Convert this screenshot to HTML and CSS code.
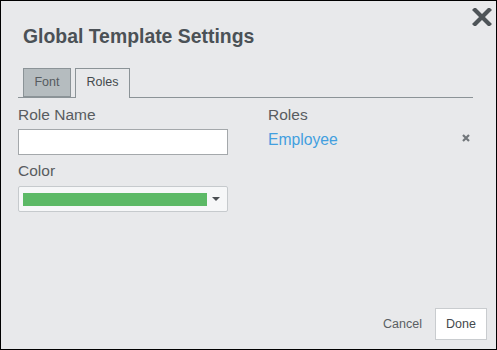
FILE: index.html
```html
<!DOCTYPE html>
<html lang="en">
<head>
  <meta charset="UTF-8">
  <title>Global Template Settings</title>
  <link rel="stylesheet" href="styles.css">
</head>
<body>
  <div class="dialog">
    <button class="close-button" title="Close">
      <svg width="20" height="18" viewBox="0 0 20 18">
        <path d="M3 2 L17 16 M17 2 L3 16" stroke="#4e5458" stroke-width="4.2" stroke-linecap="square"/>
      </svg>
    </button>

    <h1 class="dialog-title">Global Template Settings</h1>

    <div class="tab-bar">
      <div class="tab">Font</div>
      <div class="tab tab-active">Roles</div>
    </div>

    <div class="form-columns">
      <div class="form-left">
        <label class="field-label">Role Name</label>
        <input class="text-input" type="text">
        <label class="field-label color-label">Color</label>
        <div class="color-select">
          <span class="color-swatch"></span>
          <span class="caret"></span>
        </div>
      </div>
      <div class="form-right">
        <div class="field-label">Roles</div>
        <div class="role-row">
          <a class="role-link">Employee</a>
          <svg class="role-remove" width="8" height="8" viewBox="0 0 8 8">
            <path d="M1 1 L7 7 M7 1 L1 7" stroke="#72777b" stroke-width="2.2"/>
          </svg>
        </div>
      </div>
    </div>

    <div class="dialog-footer">
      <span class="cancel-link">Cancel</span>
      <button class="done-button">Done</button>
    </div>
  </div>
</body>
</html>
```

FILE: styles.css
```css
body, html {
  margin: 0;
  padding: 0;
  font-family: "Liberation Sans", Arial, sans-serif;
}

.dialog {
  position: relative;
  box-sizing: border-box;
  width: 497px;
  height: 350px;
  border: 1px solid #000;
  background-color: #e8e9eb;
  display: flex;
  flex-direction: column;
  padding: 0 23px 0 17px;
}

.close-button {
  position: absolute;
  top: 7px;
  right: 4px;
  width: 20px;
  height: 18px;
  padding: 0;
  border: none;
  background: none;
  cursor: pointer;
}

.close-button svg {
  display: block;
}

.dialog-title {
  margin: 24px 0 0 5px;
  font-size: 19.4px;
  line-height: 22px;
  font-weight: 700;
  color: #4b5156;
}

.tab-bar {
  display: flex;
  gap: 4px;
  margin-top: 21px;
  padding-left: 5px;
  border-bottom: 1px solid #8b9397;
  height: 29px;
}

.tab {
  box-sizing: border-box;
  height: 29px;
  padding: 0;
  border: 1px solid #8b9397;
  background-color: #b5bcbf;
  font-size: 12.5px;
  line-height: 27px;
  color: #565b5f;
  width: 48px;
  text-align: center;
}

.tab-active {
  width: 55px;
  height: 30px;
  border-bottom: none;
  background-color: #e8e9eb;
  color: #44494d;
}

.form-columns {
  display: flex;
  gap: 40px;
}

.form-left {
  width: 210px;
  display: flex;
  flex-direction: column;
}

.form-right {
  flex: 1;
}

.field-label {
  display: block;
  margin-top: 8px;
  font-size: 15.5px;
  line-height: 18px;
  color: #585c60;
}

.color-label {
  margin-top: 7px;
}

.text-input {
  box-sizing: border-box;
  margin-top: 5px;
  width: 210px;
  height: 26px;
  border: 1px solid #a4a8ab;
  background-color: #fff;
  padding: 0 4px;
}

.color-select {
  box-sizing: border-box;
  margin-top: 6px;
  width: 210px;
  height: 26px;
  border: 1px solid #c6cacd;
  border-radius: 2px;
  background-color: #f6f7f8;
  display: flex;
  align-items: center;
  padding: 0 6px 0 4px;
}

.color-swatch {
  width: 184px;
  height: 13px;
  background-color: #5cb966;
}

.caret {
  margin-left: auto;
  margin-right: 1px;
  width: 0;
  height: 0;
  border-left: 4px solid transparent;
  border-right: 4px solid transparent;
  border-top: 4px solid #4a4e52;
}

.role-row {
  display: flex;
  align-items: center;
  margin-top: 7px;
}

.role-link {
  font-size: 15.7px;
  line-height: 18px;
  color: #429fdf;
  cursor: pointer;
}

.role-remove {
  margin-left: auto;
  margin-right: 3px;
  position: relative;
  top: -2px;
}

.dialog-footer {
  margin-top: auto;
  margin-right: -14px;
  margin-bottom: 9px;
  display: flex;
  justify-content: flex-end;
  align-items: center;
  gap: 13px;
}

.cancel-link {
  font-size: 12.5px;
  color: #5a5f63;
  cursor: pointer;
}

.done-button {
  box-sizing: border-box;
  width: 52px;
  height: 32px;
  border: 1px solid #c9cccf;
  background-color: #fff;
  font-family: "Liberation Sans", Arial, sans-serif;
  font-size: 12.5px;
  color: #44494d;
  cursor: pointer;
}
```
